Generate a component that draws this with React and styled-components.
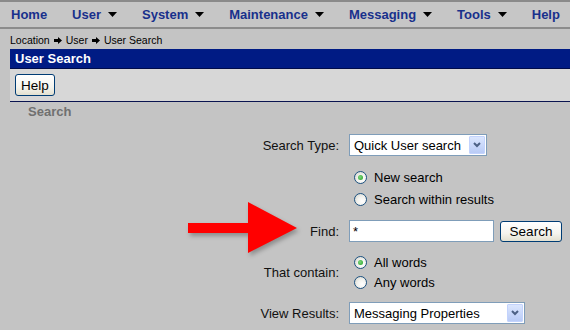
import React from 'react'
import styled, { createGlobalStyle } from 'styled-components'

const GlobalStyle = createGlobalStyle`
  html, body {
    margin: 0;
    padding: 0;
    background: #c4c4c4;
  }
  body {
    font-family: "Liberation Sans", Arial, sans-serif;
    font-size: 13px;
    color: #000;
  }
`

const Page = styled.div`
  position: relative;
  width: 570px;
  height: 330px;
  overflow: hidden;
  background: #c4c4c4;
`

const NavBar = styled.nav`
  display: flex;
  justify-content: space-between;
  align-items: center;
  height: 25px;
  padding: 0 10px 0 11px;
  border-top: 2px solid #8a8a8a;
  border-bottom: 2px solid #8c8c8c;
  background: #c6c6c6;
`

const NavItem = styled.div`
  display: flex;
  align-items: center;
  gap: 7px;
  font-weight: bold;
  font-size: 13px;
  color: #18308c;
`

const Crumbs = styled.div`
  display: flex;
  align-items: flex-end;
  height: 20px;
  padding: 0 0 3px 10px;
  box-sizing: border-box;
  font-size: 10.5px;
  color: #000;
  gap: 4px;
`

const CrumbArrow = styled.svg`
  margin-bottom: 2px;
`

const Main = styled.div`
  margin-left: 10px;
`

const TitleBar = styled.div`
  display: flex;
  align-items: center;
  height: 19px;
  padding-left: 5px;
  background: #001b84;
  border-bottom: 1px solid #000c4a;
  color: #fff;
  font-weight: bold;
  font-size: 13px;
`

const Toolbar = styled.div`
  display: flex;
  align-items: center;
  height: 32px;
  padding-left: 5px;
  background: #d7d7d7;
  border-bottom: 1px solid #0a1450;
`

const XPButton = styled.button`
  height: ${p => p.$h || 22}px;
  width: ${p => p.$w}px;
  padding: 0;
  border: 1px solid #003c74;
  border-radius: 3px;
  background: linear-gradient(#ffffff 0%, #f5f4ee 60%, #e3e0d0 100%);
  font-family: "Liberation Sans", Arial, sans-serif;
  font-size: 13.5px;
  color: #000;
`

const SectionHead = styled.div`
  padding: 2px 0 0 18px;
  line-height: 16px;
  font-weight: bold;
  font-size: 13px;
  color: #707070;
`

const Form = styled.div`
  display: grid;
  grid-template-columns: 329px 1fr;
  column-gap: 10px;
  row-gap: 10px;
  margin-top: 14px;
  align-items: center;
`

const Label = styled.div`
  text-align: right;
  font-size: 13px;
  color: #111;
`

const Cell = styled.div`
  display: flex;
  align-items: center;
  gap: 6px;
`

const Select = styled.div`
  display: flex;
  align-items: center;
  justify-content: space-between;
  box-sizing: border-box;
  width: ${p => p.$w}px;
  height: 22px;
  padding: 0 1px 0 4px;
  border: 1px solid #7f9db9;
  background: #fff;
  font-size: 13px;
`

const DropButton = styled.span`
  display: flex;
  align-items: center;
  justify-content: center;
  width: 16px;
  height: 18px;
  box-sizing: border-box;
  border: 1px solid #c3d3fd;
  border-radius: 1px;
  background: linear-gradient(#dbe6fe, #b9cbf6);
`

const TextInput = styled.div`
  box-sizing: border-box;
  width: 145px;
  height: 22px;
  padding: 3px 3px;
  border: 1px solid #7f9db9;
  background: #fff;
  font-size: 13px;
`

const RadioGroup = styled.div`
  display: flex;
  flex-direction: column;
  padding-left: 5px;
`

const RadioRow = styled.label`
  display: flex;
  align-items: center;
  gap: 7px;
  height: ${p => (p.$tall ? 22 : 20)}px;
  font-size: 13px;
`

const RadioDot = styled.span`
  position: relative;
  width: 13px;
  height: 13px;
  box-sizing: border-box;
  border-radius: 50%;
  border: 1px solid #1c5180;
  background: radial-gradient(circle at 65% 65%, #ffffff 0%, #f2f2ee 45%, #cfcfc6 100%);
  flex: none;

  &::after {
    content: '';
    display: ${p => (p.$on ? 'block' : 'none')};
    position: absolute;
    left: 3px;
    top: 3px;
    width: 5px;
    height: 5px;
    border-radius: 50%;
    background: radial-gradient(circle at 40% 40%, #7fd67f, #21a121);
  }
`

const ArrowOverlay = styled.svg`
  position: absolute;
  left: 186px;
  top: 200px;
  filter: drop-shadow(2px 3px 2px rgba(0, 0, 0, 0.28));
`

const Caret = () => (
  <svg width="9" height="5" viewBox="0 0 9 5">
    <polygon points="0,0 9,0 4.5,5" fill="#000" />
  </svg>
)

const Chevron = () => (
  <svg width="8" height="6" viewBox="0 0 8 6">
    <polyline points="1,1 4,4 7,1" fill="none" stroke="#4d6185" strokeWidth="2" />
  </svg>
)

const Sep = () => (
  <CrumbArrow width="8" height="7" viewBox="0 0 8 7">
    <polygon points="0,2 4,2 4,0 8,3.5 4,7 4,5 0,5" fill="#000" />
  </CrumbArrow>
)

const menu = [
  { name: 'Home' },
  { name: 'User', sub: true },
  { name: 'System', sub: true },
  { name: 'Maintenance', sub: true },
  { name: 'Messaging', sub: true },
  { name: 'Tools', sub: true },
  { name: 'Help' },
]

export default function App() {
  return (
    <Page>
      <GlobalStyle />
      <NavBar>
        {menu.map(m => (
          <NavItem key={m.name}>
            {m.name}
            {m.sub && <Caret />}
          </NavItem>
        ))}
      </NavBar>
      <Crumbs>
        Location <Sep /> User <Sep /> User Search
      </Crumbs>
      <Main>
        <TitleBar>User Search</TitleBar>
        <Toolbar>
          <XPButton $w={40}>Help</XPButton>
        </Toolbar>
        <SectionHead>Search</SectionHead>
        <Form>
          <Label>Search Type:</Label>
          <Cell>
            <Select $w={138}>
              Quick User search
              <DropButton><Chevron /></DropButton>
            </Select>
          </Cell>

          <div />
          <RadioGroup>
            <RadioRow $tall><RadioDot $on />New search</RadioRow>
            <RadioRow $tall><RadioDot />Search within results</RadioRow>
          </RadioGroup>

          <Label>Find:</Label>
          <Cell>
            <TextInput>*</TextInput>
            <XPButton $w={62} $h={21}>Search</XPButton>
          </Cell>

          <Label>That contain:</Label>
          <RadioGroup>
            <RadioRow><RadioDot $on />All words</RadioRow>
            <RadioRow><RadioDot />Any words</RadioRow>
          </RadioGroup>

          <Label>View Results:</Label>
          <Cell>
            <Select $w={176}>
              Messaging Properties
              <DropButton><Chevron /></DropButton>
            </Select>
          </Cell>
        </Form>
      </Main>
      <ArrowOverlay width="116" height="58" viewBox="186 200 116 58">
        <polygon
          points="188,223 248,223 248,202 297,228 248,253 248,233 188,233"
          fill="#ff0000"
        />
      </ArrowOverlay>
    </Page>
  )
}
